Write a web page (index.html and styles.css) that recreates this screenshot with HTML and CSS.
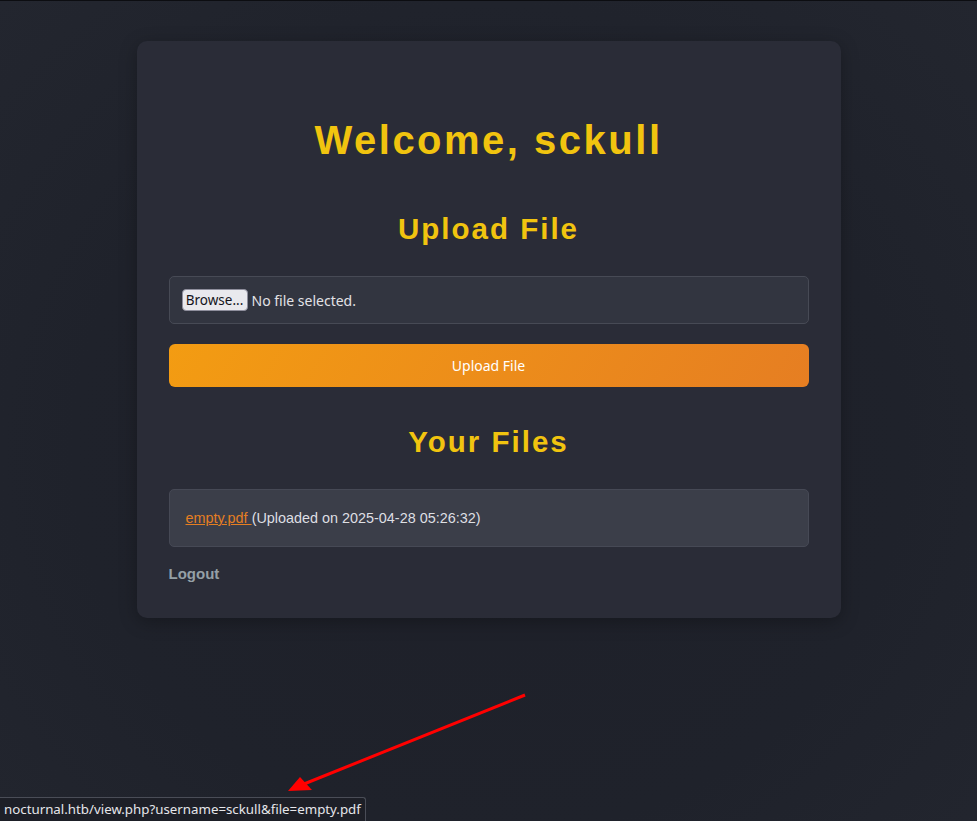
FILE: index.html
```html
<!DOCTYPE html>
<html lang="en">
<head>
<meta charset="utf-8">
<title>Dashboard</title>
<link rel="stylesheet" href="styles.css">
</head>
<body>
<div class="topline"></div>
<main class="card">
  <h1 class="title">Welcome, sckull</h1>
  <h2 class="section">Upload File</h2>
  <div class="file-input">
    <span class="browse">Browse...</span>
    <span class="nofile">No file selected.</span>
  </div>
  <button class="upload-btn">Upload File</button>
  <h2 class="section section-files">Your Files</h2>
  <div class="file-item">
    <a class="file-link" href="#">empty.pdf </a><span class="file-meta">(Uploaded on 2025-04-28 05:26:32)</span>
  </div>
  <a class="logout" href="#">Logout</a>
</main>
<svg class="arrow" width="977" height="821" viewBox="0 0 977 821">
  <line x1="525" y1="695" x2="304" y2="784" stroke="#ff0000" stroke-width="3"/>
  <polygon points="288,791 300,777 312,790" fill="#ff0000"/>
</svg>
<div class="statusbar">nocturnal.htb/view.php?username=sckull&amp;file=empty.pdf</div>
</body>
</html>
```

FILE: styles.css
```css
html, body {
  margin: 0;
  padding: 0;
  height: 821px;
  overflow: hidden;
}
body {
  background: radial-gradient(ellipse at 50% 55%, #1e2029 0%, #1f222b 60%, #23262f 100%);
  font-family: "Liberation Sans", Arial, sans-serif;
  position: relative;
}
.topline {
  height: 1px;
  background: #0c0d11;
}
.card {
  box-sizing: border-box;
  width: 704px;
  margin: 40px auto 0;
  height: 577px;
  background: #2a2c37;
  border-radius: 10px;
  padding: 76px 32px 0;
  box-shadow: 0 4px 18px rgba(0, 0, 0, 0.28);
}
.title {
  margin: 0;
  text-align: center;
  color: #f1c40f;
  font-size: 40px;
  font-weight: bold;
  letter-spacing: 2.5px;
  line-height: 46px;
}
.section {
  margin: 49px 0 0;
  text-align: center;
  color: #f1c40f;
  font-size: 29.5px;
  font-weight: bold;
  letter-spacing: 2px;
  line-height: 33px;
}
.file-input {
  box-sizing: border-box;
  margin-top: 31px;
  height: 48px;
  border: 1px solid #474a55;
  border-radius: 5px;
  background: #323540;
  padding: 12px;
  display: flex;
  align-items: center;
  gap: 4px;
  font-family: "Noto Sans", sans-serif;
  font-size: 14px;
}
.browse {
  box-sizing: border-box;
  height: 22px;
  width: 66px;
  display: flex;
  align-items: center;
  justify-content: center;
  background: #e9e9ed;
  border: 1px solid #8f8f9d;
  border-radius: 4px;
  color: #15141a;
  font-size: 13.5px;
}
.nofile {
  color: #e2e2e6;
}
.upload-btn {
  display: block;
  width: 100%;
  margin-top: 20px;
  height: 43px;
  border: none;
  border-radius: 6px;
  background: linear-gradient(120deg, #f39c12 0%, #e67e22 100%);
  color: #ffffff;
  font-family: "Noto Sans", sans-serif;
  font-size: 14px;
}
.section-files {
  margin-top: 38px;
}
.file-item {
  box-sizing: border-box;
  margin-top: 31px;
  height: 58px;
  background: #3b3e49;
  border: 1px solid #464955;
  border-radius: 5px;
  padding: 0 16px;
  display: flex;
  align-items: center;
  font-size: 14.4px;
}
.file-link {
  color: #e67e22;
  text-decoration: underline;
  white-space: pre;
}
.file-meta {
  color: #dedfe3;
  margin-left: 0;
}
.logout {
  display: inline-block;
  margin-top: 18px;
  color: #95a0a6;
  font-weight: bold;
  font-size: 15px;
  text-decoration: none;
}
.arrow {
  position: absolute;
  left: 0;
  top: 0;
  pointer-events: none;
}
.statusbar {
  position: absolute;
  left: 0;
  bottom: 0;
  box-sizing: border-box;
  height: 24px;
  width: 366px;
  padding: 0 4px;
  background: #1d1f27;
  border-top: 1px solid #4a4d57;
  border-right: 1px solid #4a4d57;
  border-top-right-radius: 3px;
  color: #e6e6ea;
  font-family: "Noto Sans", sans-serif;
  font-size: 13.3px;
  line-height: 23px;
  white-space: nowrap;
}
```
